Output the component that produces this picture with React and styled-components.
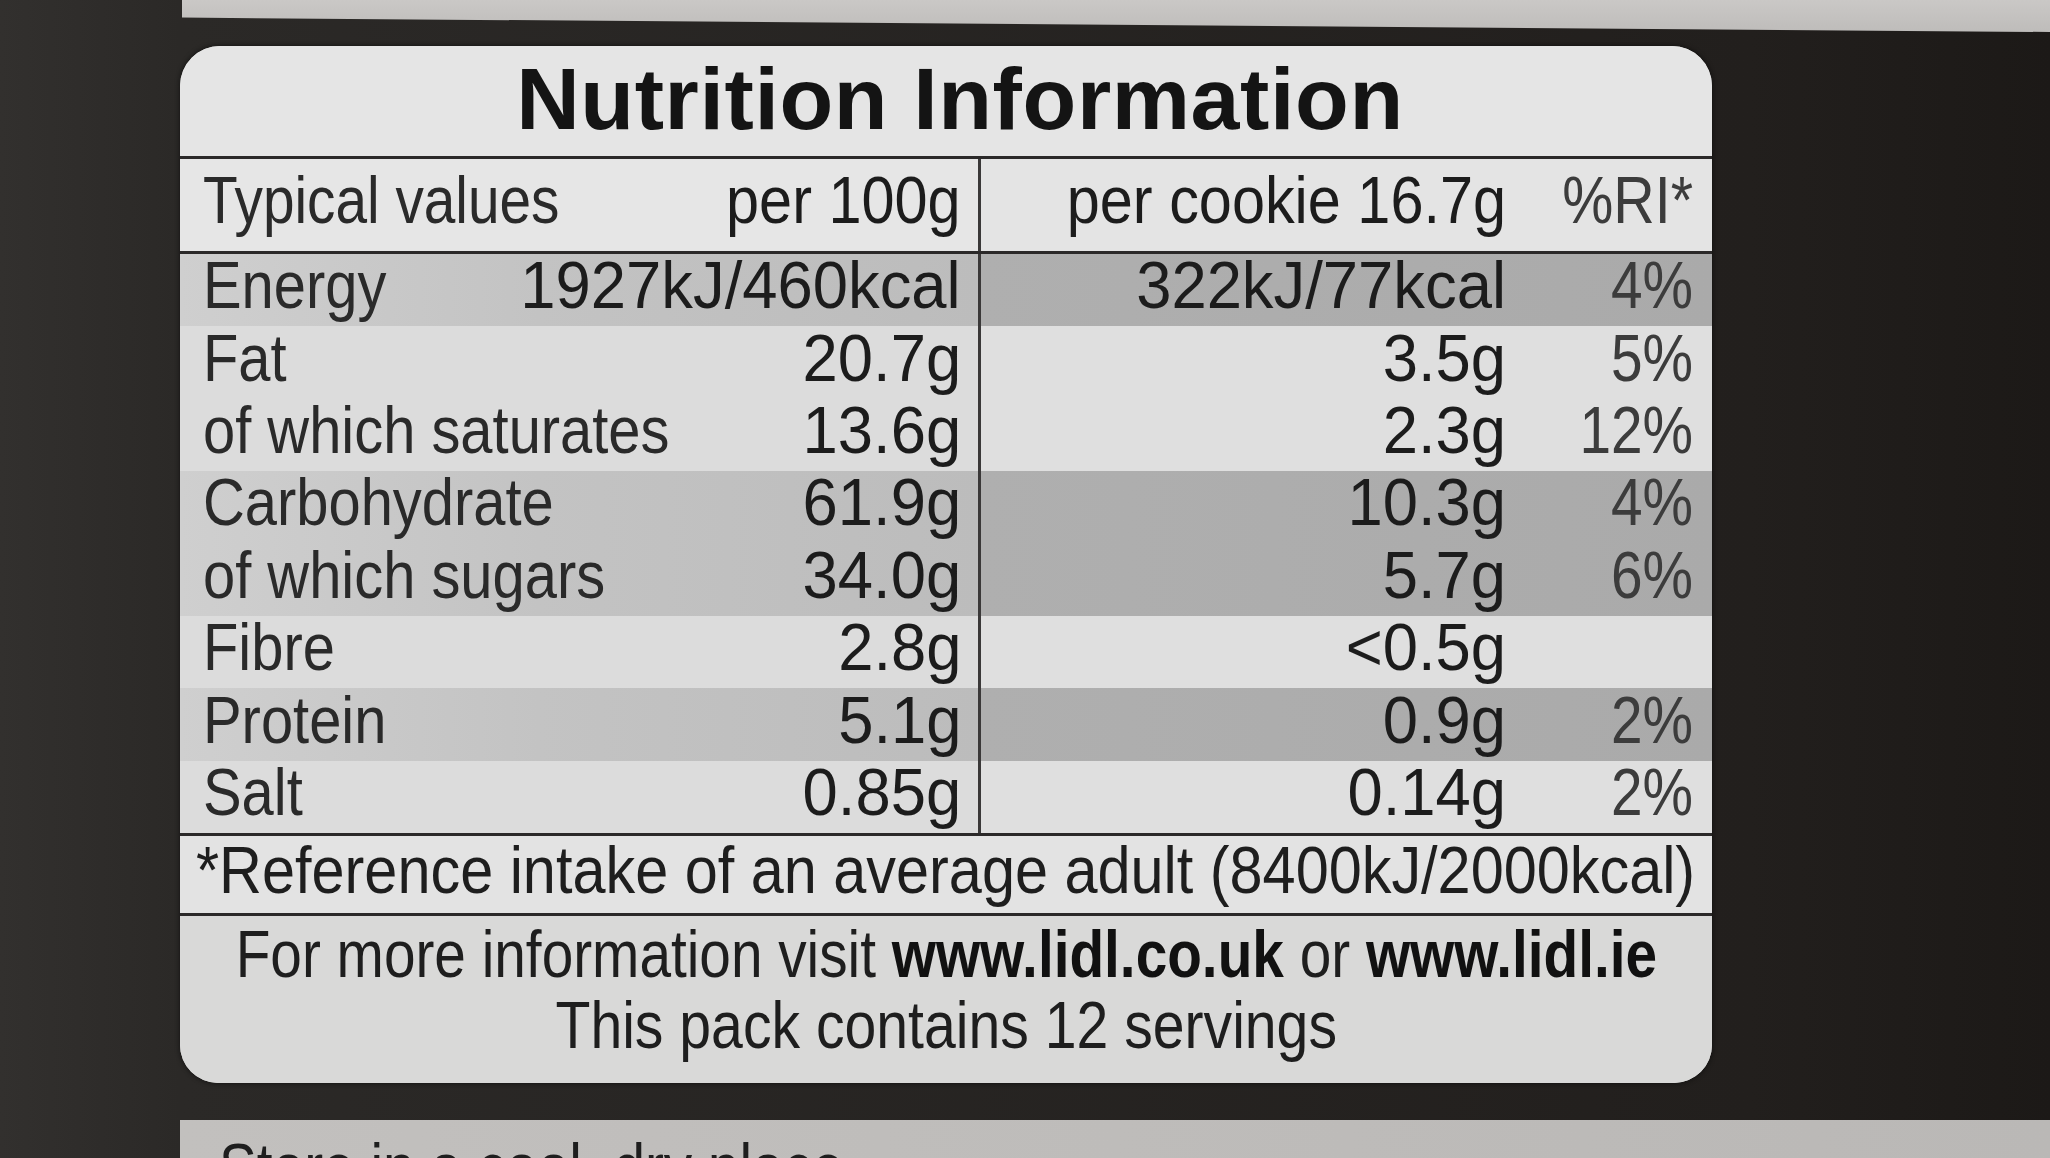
import React from 'react';
import styled, { createGlobalStyle } from 'styled-components';

const GlobalStyle = createGlobalStyle`
  html, body { margin: 0; padding: 0; background: #262422; }
  body { width: 2050px; height: 1158px; overflow: hidden; }
`;

const sans = `"Liberation Sans", Arial, sans-serif`;

const Page = styled.div`
  width: 2050px;
  height: 1158px;
  overflow: hidden;
  box-sizing: border-box;
  padding-left: 180px;
  display: flex;
  flex-direction: column;
  background: linear-gradient(90deg, #32302e 0px, #2b2927 180px, #221f1d 1750px, #1c1917 2050px);
  font-family: ${sans};
  color: #222;
`;

const TopStrip = styled.div`
  flex: none;
  height: 32px;
  margin-left: 2px;
  background: linear-gradient(180deg, #cac8c6, #bebcba);
  clip-path: polygon(0 0, 100% 0, 100% 100%, 0 55%);
`;

const Card = styled.section`
  flex: none;
  margin-top: 14px;
  width: 1532px;
  height: 1037px;
  display: flex;
  flex-direction: column;
  overflow: hidden;
  border-radius: 40px 40px 38px 38px;
  background: #dedddc;
  box-shadow: 0 0 4px 1px rgba(10, 10, 10, 0.55);
`;

const Title = styled.h1`
  flex: none;
  margin: 0;
  height: 113px;
  box-sizing: border-box;
  padding: 9px 0 0 28px;
  text-align: center;
  font: 700 88px/88px ${sans};
  letter-spacing: 0.6px;
  color: #141414;
  background: #e5e5e5;
  border-bottom: 3px solid #2b2929;
`;

/* condensed text: the label's face is a narrow one, so glyphs are squeezed horizontally */
const Squeeze = styled.span`
  display: inline-block;
  white-space: nowrap;
  transform: scaleX(${(p) => p.$sx || 0.86});
  transform-origin: ${(p) => p.$origin || 'left'} center;
`;

const Table = styled.div`
  flex: none;
  display: flex;
  flex-direction: column;
  border-bottom: 3px solid #2b2929;
`;

const Row = styled.div`
  display: grid;
  grid-template-columns: 798px 1fr;
  box-sizing: border-box;
  height: ${(p) => (p.$head ? '95px' : '72.4px')};
  border-bottom: ${(p) => (p.$head ? '3px solid #2b2929' : 'none')};
  font-size: 66px;
  line-height: 60px;
`;

const leftBg = {
  head: '#e6e6e6',
  light: '#dcdcdc',
  grey: 'linear-gradient(90deg, #cfcfcf 0%, #c3c3c3 45%, #bcbcbc 100%)',
};
const rightBg = {
  head: '#e4e4e4',
  light: '#dfdfdf',
  grey: 'linear-gradient(90deg, #afafaf 0%, #aaaaaa 100%)',
};

const LeftCell = styled.div`
  display: flex;
  justify-content: space-between;
  align-items: center;
  padding: 0 17px 10px 23px;
  background: ${(p) => leftBg[p.$shade]};
`;

const RightCell = styled.div`
  display: grid;
  grid-template-columns: 1fr 187px;
  align-items: center;
  padding: 0 19px 10px 0;
  text-align: right;
  border-left: 3px solid #3a3838;
  background: ${(p) => rightBg[p.$shade]};
`;

const Label = styled(Squeeze)`
  color: #2a2a2a;
`;

const Value = styled(Squeeze)`
  color: #1c1c1c;
`;

const Ri = styled(Squeeze)`
  color: #3c3c3c;
`;

const Footnote = styled.div`
  flex: none;
  height: 80px;
  box-sizing: border-box;
  display: flex;
  align-items: center;
  padding: 0 0 10px 16px;
  font-size: 66px;
  line-height: 60px;
  color: #1e1e1e;
  background: #e3e3e3;
  border-bottom: 3px solid #2b2929;
`;

const Footer = styled.div`
  flex: 1;
  padding-top: 3px;
  font-size: 66px;
  line-height: 71px;
  color: #1e1e1e;
  background: #d9d9d8;
`;

const FooterLine = styled.div`
  display: flex;
  justify-content: center;
  padding-left: ${(p) => p.$shift || 0}px;
`;

const Strong = styled.b`
  font-weight: 700;
  color: #111;
`;

const BottomPanel = styled.div`
  flex: 1;
  margin-top: 37px;
  overflow: hidden;
  padding: 14px 0 0 39px;
  font-size: 66px;
  line-height: 66px;
  color: #1e1e1e;
  background: linear-gradient(90deg, #c2c0be, #bab8b6);
`;

const rows = [
  { label: 'Energy', v: '1927kJ/460kcal', c: '322kJ/77kcal', ri: '4%', shade: 'grey' },
  { label: 'Fat', v: '20.7g', c: '3.5g', ri: '5%', shade: 'light' },
  { label: 'of which saturates', v: '13.6g', c: '2.3g', ri: '12%', shade: 'light' },
  { label: 'Carbohydrate', v: '61.9g', c: '10.3g', ri: '4%', shade: 'grey' },
  { label: 'of which sugars', v: '34.0g', c: '5.7g', ri: '6%', shade: 'grey' },
  { label: 'Fibre', v: '2.8g', c: '<0.5g', ri: '', shade: 'light' },
  { label: 'Protein', v: '5.1g', c: '0.9g', ri: '2%', shade: 'grey' },
  { label: 'Salt', v: '0.85g', c: '0.14g', ri: '2%', shade: 'light' },
];

export default function App() {
  return (
    <>
      <GlobalStyle />
      <Page>
        <TopStrip />
        <Card>
          <Title>Nutrition Information</Title>
          <Table>
            <Row $head>
              <LeftCell $shade="head">
                <Label $sx={0.86}>Typical values</Label>
                <Value $sx={0.9} $origin="right">per 100g</Value>
              </LeftCell>
              <RightCell $shade="head">
                <Value $sx={0.9} $origin="right">per cookie 16.7g</Value>
                <Ri $sx={0.87} $origin="right">%RI*</Ri>
              </RightCell>
            </Row>
            {rows.map((r) => (
              <Row key={r.label}>
                <LeftCell $shade={r.shade}>
                  <Label $sx={0.877}>{r.label}</Label>
                  <Value $sx={0.96} $origin="right">{r.v}</Value>
                </LeftCell>
                <RightCell $shade={r.shade}>
                  <Value $sx={0.96} $origin="right">{r.c}</Value>
                  <Ri $sx={0.86} $origin="right">{r.ri}</Ri>
                </RightCell>
              </Row>
            ))}
          </Table>
          <Footnote>
            <Squeeze $sx={0.9}>*Reference intake of an average adult (8400kJ/2000kcal)</Squeeze>
          </Footnote>
          <Footer>
            <FooterLine $shift={-4}>
              <Squeeze $sx={0.86} $origin="center">
                For more information visit <Strong>www.lidl.co.uk</Strong> or <Strong>www.lidl.ie</Strong>
              </Squeeze>
            </FooterLine>
            <FooterLine $shift={-8}>
              <Squeeze $sx={0.866} $origin="center">This pack contains 12 servings</Squeeze>
            </FooterLine>
          </Footer>
        </Card>
        <BottomPanel>
          <Squeeze $sx={0.86}>Store in a cool, dry place.</Squeeze>
        </BottomPanel>
      </Page>
    </>
  );
}
